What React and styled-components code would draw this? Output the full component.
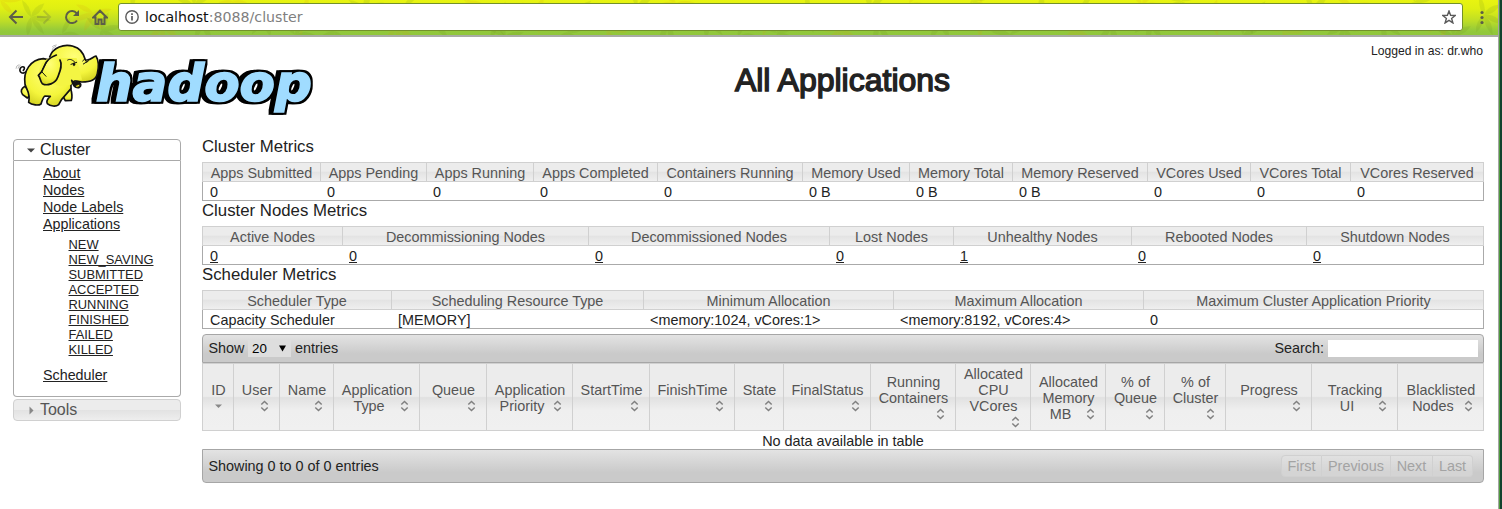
import React from 'react';
import styled, { createGlobalStyle, css } from 'styled-components';

const Global = createGlobalStyle`
  * { box-sizing: border-box; }
  html, body { margin: 0; padding: 0; background: #fff; }
  body { font-family: "Liberation Sans", Arial, sans-serif; font-size: 14.4px; color: #222; overflow: hidden; }
`;

const Window = styled.div`
  width: 1502px;
  height: 509px;
  display: flex;
  background: #fff;
  overflow: hidden;
`;
const View = styled.div`
  flex: 1;
  min-width: 0;
  display: flex;
  flex-direction: column;
`;
const DesktopEdge = styled.div`
  width: 4px;
  border-left: 1px solid #a5a5a5;
  background: linear-gradient(90deg, #4f9a3d 0 1px, #12422e 1px);
`;

const Toolbar = styled.header`
  height: 37px;
  flex: none;
  display: grid;
  border-bottom: 2px solid #a9aca5;
  background: linear-gradient(#e8f410 0, #dfef13 25%, #bddd27 60%, #93c93b 88%, #90c63c 100%);
  & > * { grid-area: 1 / 1; }
`;
const Foliage = styled.svg`
  width: 1498px;
  height: 35px;
`;
const ToolbarItems = styled.div`
  display: flex;
  align-items: flex-start;
  padding: 3px 0 0 8px;
  z-index: 1;
`;
const NavIcon = styled.svg`
  width: 16px;
  height: 16px;
  flex: none;
  margin: 6px 12px 0 0;
  fill: none;
  stroke: #5c5e48;
  stroke-width: 2;
  opacity: ${(p) => (p.$faded ? 0.25 : 1)};
`;
const Address = styled.div`
  width: 1345px;
  flex: none;
  height: 28px;
  margin-left: -2px;
  padding: 0 6px;
  display: flex;
  align-items: center;
  border: 1px solid #73912a;
  border-radius: 3px;
  background: #fff;
  font: 14.2px "DejaVu Sans", sans-serif;
  color: #808080;
`;
const Host = styled.span`color: #111;`;
const Url = styled.span`
  flex: 1;
  margin-left: 6px;
  white-space: nowrap;
`;
const AddressIcon = styled.svg`
  width: 14px;
  height: 14px;
  fill: none;
  stroke: #5a5a5a;
  stroke-width: 1.4;
`;
const Dots = styled.svg`
  width: 4px;
  height: 14px;
  margin: 7px 0 0 17px;
  fill: #5c5e48;
`;

const PageHead = styled.div`
  height: 102px;
  flex: none;
  display: grid;
  grid-template-columns: 202px 1281px;
`;
const Logo = styled.svg`
  width: 310px;
  height: 80px;
  margin: 1px 0 0 10px;
  overflow: visible;
`;
const LogoWord = styled.text`
  font: italic bold 156px "DejaVu Sans", sans-serif;
  fill: #a0dcff;
  stroke: #a0dcff;
  stroke-width: 5px;
  stroke-linejoin: miter;
`;
const HeadRight = styled.div`
  display: flex;
  flex-direction: column;
`;
const User = styled.div`
  align-self: flex-end;
  margin-top: 7px;
  font-size: 12.15px;
  line-height: 14px;
  white-space: nowrap;
`;
const Title = styled.h1`
  margin: 4px 0 0;
  text-align: center;
  font-size: 32px;
  line-height: 37px;
  font-weight: normal;
  -webkit-text-stroke: 1.4px #222;
`;

const Body = styled.div`
  display: flex;
  padding-left: 13px;
`;
const Sidebar = styled.nav`
  width: 168px;
  margin-right: 21px;
`;
const Fold = styled.div`
  height: 22px;
  display: flex;
  align-items: center;
  padding-left: 12px;
  font-size: 16px;
  letter-spacing: -0.05px;
  border: 1px solid #aaa;
  border-radius: 4px 4px 0 0;
  color: #222;
  ${(p) => p.$closed && css`
    margin-top: 2px;
    border-color: #d0d0d0;
    border-radius: 4px;
    color: #555;
    background: linear-gradient(#ececec 0 48%, #e2e2e2 50%, #eee 100%);
  `}
`;
const FoldArrow = styled.svg`
  width: 10px;
  height: 10px;
  margin-right: 4px;
  fill: ${(p) => p.$color};
`;
const MenuBody = styled.div`
  height: 236px;
  padding: 4px 0 0 29px;
  border: 1px solid #aaa;
  border-top: 0;
  border-radius: 0 0 4px 4px;
  display: flex;
  flex-direction: column;
  align-items: flex-start;
`;
const MenuLink = styled.a`
  font-size: 14.3px;
  line-height: 17px;
  text-decoration: underline;
`;
const StateList = styled.div`
  display: flex;
  flex-direction: column;
  align-items: flex-start;
  margin: 4px 0 10px 25.5px;
`;
const StateLink = styled(MenuLink)`
  font-size: 12.9px;
  line-height: 15px;
`;

const Main = styled.main`width: 1282px;`;
const SectionTitle = styled.div`
  height: ${(p) => (p.$first ? 23 : 25)}px;
  padding-top: ${(p) => (p.$first ? 0 : 2)}px;
  font-size: 16.8px;
  line-height: 15px;
`;
const gridCols = css`
  display: grid;
  grid-template-columns: ${(p) => p.$cols};
`;
const Metrics = styled.div`height: 39px;`;
const MetricsHead = styled.div`
  ${gridCols}
  height: 20px;
  border: solid #d0d0d0;
  border-width: 1px 1px 1px 0;
  background: linear-gradient(#ececec 0 46%, #e3e3e3 50%, #efefef 100%);
  color: #555;
`;
const MetricsTh = styled.div`
  height: 18px;
  border-left: 1px solid #d0d0d0;
  text-align: center;
  line-height: 20px;
  white-space: nowrap;
`;
const MetricsRow = styled.div`
  ${gridCols}
  height: 19px;
  border: 1px solid #aaa;
  border-top: 0;
`;
const MetricsTd = styled.div`
  padding-left: 6px;
  &:first-child { padding-left: 7px; }
  line-height: 21px;
  white-space: nowrap;
  text-decoration: ${(p) => (p.$link ? 'underline' : 'none')};
`;

const Bar = styled.div`
  height: ${(p) => (p.$foot ? 34 : 29)}px;
  margin-top: ${(p) => (p.$foot ? 0 : 5)}px;
  padding: 0 5px 0 5.4px;
  display: flex;
  align-items: center;
  line-height: ${(p) => (p.$foot ? 16 : 17)}px;
  border: 1px solid #a6a6a6;
  border-radius: ${(p) => (p.$foot ? '0 0 4px 4px' : '4px 4px 0 0')};
  background: linear-gradient(#e3e3e3, #cacaca 70%, #cacaca);
`;
const BarText = styled.span`padding-bottom: 1px;`;
const Select = styled.div`
  width: 43px;
  height: 17px;
  margin: 0 4px 0 3.600px;
  padding: 0 5px 0 4px;
  display: flex;
  align-items: center;
  justify-content: space-between;
  background: #dedede;
  font-size: 13.33px;
  color: #000;
`;
const Spacer = styled.div`flex: 1;`;
const SearchBox = styled.div`
  width: 150px;
  height: 17px;
  margin-left: 4px;
  background: #fff;
`;
const AppsHead = styled.div`
  ${gridCols}
  height: 68px;
  border: solid #d0d0d0;
  border-width: 1px 1px 1px 0;
  background: linear-gradient(#ececec 0 49%, #e1e1e1 51%, #efefef 70%, #f0f0f0);
  color: #555;
`;
const AppsTh = styled.div`
  border-left: 1px solid #d0d0d0;
  padding: 1px 6px 0 7px;
  display: grid;
  align-content: center;
`;
const AppsLabel = styled.div`
  display: flow-root;
  text-align: center;
  line-height: 16px;
  white-space: pre;
`;
const Sort = styled.svg`
  float: right;
  width: 16px;
  height: 16px;
`;
const Empty = styled.div`
  height: 18px;
  line-height: 20px;
  text-align: center;
`;
const Pager = styled.div`
  display: flex;
  margin-right: 5px;
  color: #a3a3a3;
`;
const PageButton = styled.div`
  width: ${(p) => p.$w}px;
  height: 22px;
  line-height: 21px;
  text-align: center;
  border: 1px solid #d0d0d0;
  border-left-width: ${(p) => (p.$first ? 1 : 0)}px;
  border-radius: ${(p) => (p.$first ? '4px 0 0 4px' : p.$last ? '0 4px 4px 0' : 0)};
  background: rgba(235, 235, 235, 0.3);
`;

const tables = [
  {
    title: 'Cluster Metrics',
    widths: [118, 106, 107, 124, 145, 107, 103, 135, 103, 100],
    cells: [['Apps Submitted', '0'], ['Apps Pending', '0'], ['Apps Running', '0'], ['Apps Completed', '0'], ['Containers Running', '0'], ['Memory Used', '0 B'], ['Memory Total', '0 B'], ['Memory Reserved', '0 B'], ['VCores Used', '0'], ['VCores Total', '0'], ['VCores Reserved', '0']],
  },
  {
    title: 'Cluster Nodes Metrics',
    link: true,
    widths: [140, 246, 241, 124, 178, 175],
    cells: [['Active Nodes', '0'], ['Decommissioning Nodes', '0'], ['Decommissioned Nodes', '0'], ['Lost Nodes', '0'], ['Unhealthy Nodes', '1'], ['Rebooted Nodes', '0'], ['Shutdown Nodes', '0']],
  },
  {
    title: 'Scheduler Metrics',
    widths: [189, 252, 250, 250],
    cells: [['Scheduler Type', 'Capacity Scheduler'], ['Scheduling Resource Type', '[MEMORY]'], ['Minimum Allocation', '<memory:1024, vCores:1>'], ['Maximum Allocation', '<memory:8192, vCores:4>'], ['Maximum Cluster Application Priority', '0']],
  },
];
const toCols = (w) => w.map((n) => `${n}px`).join(' ') + ' 1fr';

const appWidths = [31, 46, 54, 86, 67, 86, 77, 85, 49, 87, 85, 75, 75, 59, 61, 86, 86];
const appCols = ['ID', 'User', 'Name', 'Application\nType', 'Queue', 'Application\nPriority', 'StartTime', 'FinishTime', 'State', 'FinalStatus', 'Running\nContainers', 'Allocated\nCPU\nVCores', 'Allocated\nMemory\nMB', '% of\nQueue', '% of\nCluster', 'Progress', 'Tracking\nUI', 'Blacklisted\nNodes'];
const states = ['NEW', 'NEW_SAVING', 'SUBMITTED', 'ACCEPTED', 'RUNNING', 'FINISHED', 'FAILED', 'KILLED'];

function SortIcon({ down }) {
  return (
    <Sort viewBox="0 0 16 16">
      {down
        ? <path d="M4 6.500h7l-3.500 3.500z" fill="#888" />
        : <path d="M4.300 6.500 7.500 3.500l3.200 3M4.300 9.500 7.500 12.500l3.200-3" fill="none" stroke="#808080" strokeWidth="1.5" />}
    </Sort>
  );
}

function MetricsTable({ title, widths, cells, link, first }) {
  const cols = toCols(widths);
  return (
    <>
      <SectionTitle $first={first}>{title}</SectionTitle>
      <Metrics>
        <MetricsHead $cols={cols}>{cells.map(([h]) => <MetricsTh key={h}>{h}</MetricsTh>)}</MetricsHead>
        <MetricsRow $cols={cols}>{cells.map(([h, v]) => <MetricsTd key={h} $link={link}>{v}</MetricsTd>)}</MetricsRow>
      </Metrics>
    </>
  );
}

function Leaves() {
  const sprigs = Array.from({ length: 62 }, (_, i) => ({ x: i * 25 + ((i * 29) % 23), y: (i * 17) % 38, r: (i * 53) % 180 }));
  return (
    <Foliage viewBox="0 0 1498 35">
      {sprigs.map(({ x, y, r }, i) => (
        <g key={i} transform={`translate(${x} ${y}) rotate(${r})`} fill={i % 3 ? '#6f8d1c' : '#d99d13'} opacity="0.15">
          <path d="M0 0Q9-6 22 0 9 5 0 0" />
          <path d="M0 0Q2-10 15-14 11-3 0 0" />
          <path d="M0 0Q-8-8-3-19 4-9 0 0" />
          <path d="M0 0Q9 3 13 14 2 11 0 0" />
          <path d="M0 0Q-9 3-19-3-9-7 0 0" />
        </g>
      ))}
    </Foliage>
  );
}

function HadoopLogo() {
  return (
    <Logo viewBox="0 0 930 240">
      <defs>
        <radialGradient id="hide" cx="0.5" cy="0.3" r="0.75">
          <stop offset="0" stopColor="#ffff79" />
          <stop offset="0.65" stopColor="#f4f53c" />
          <stop offset="1" stopColor="#d0cf20" />
        </radialGradient>
        <filter id="slab" x="-5%" y="-10%" width="110%" height="120%" colorInterpolationFilters="sRGB">
          <feMorphology in="SourceAlpha" operator="dilate" radius="6 6" result="edge" />
          <feOffset in="edge" dx="-9" result="side" />
          <feMerge>
            <feMergeNode in="side" />
            <feMergeNode in="edge" />
            <feMergeNode in="SourceGraphic" />
          </feMerge>
        </filter>
      </defs>
      <LogoWord x="257" y="189" textLength="649" lengthAdjust="spacingAndGlyphs" filter="url(#slab)">hadoop</LogoWord>
      <g stroke="#111" strokeWidth="5" strokeLinejoin="round" strokeLinecap="round" fill="url(#hide)">
        <path d="M51 98C40 112 25 103 31 91 37 82 49 88 40 97" fill="none" />
        <path d="M160 152C158 170 160 181 166 188L184 187C189 174 185 162 181 149Z" />
        <path d="M45 145C34 151 30 160 38 170L52 180 65 169Z" />
        <path d="M100 62C61 65 39 99 45 139 50 157 62 164 56 193 66 202 86 203 93 198 98 184 100 175 105 174L121 175C114 181 108 190 112 197 121 206 139 206 146 200 151 189 157 180 170 167L183 152 183 80Z" />
        <path d="M119 57C128 28 163 16 190 25 211 30 221 47 226 65 240 71 249 55 258 54 266 67 267 86 262 107 257 127 242 132 216 132 207 131 197 130 192 127" />
        <path d="M119 60C98 66 80 90 90 125L150 145 183 140 193 127 216 125 200 60Z" fill="#f4f543" stroke="none" />
        <path d="M185 127C188 140 194 151 207 149 215 144 213 137 208 133" fill="#151515" />
        <path d="M196 143 207 139 210 145 201 148Z" fill="#eee51f" strokeWidth="2" />
        <path d="M139 51C118 59 108 67 103 84 99 97 94 104 85 112 92 120 90 130 97 137 111 145 137 137 143 118 149 102 159 82 150 66" />
        <path d="M113 68 96 97M97 103 108 115M173 66C181 61 189 67 194 72M183 79 200 73M218 69 224 63 230 73M220 78 236 68" fill="none" strokeWidth="3" />
        <ellipse cx="192" cy="79" rx="3" ry="5" fill="#111" strokeWidth="1" />
        <path d="M18 91Q18 82 27 80M24 91Q24 85 31 82M126 36Q128 27 137 25M127 26Q130 22 139 21" fill="none" stroke="#999" strokeWidth="2" />
      </g>
    </Logo>
  );
}

export default function App() {
  return (
    <Window>
      <Global />
      <View>
        <Toolbar>
          <Leaves />
          <ToolbarItems>
            <NavIcon viewBox="0 0 16 16"><path d="M15 8H2.500M8.500 1.500 2 8l6.500 6.500" /></NavIcon>
            <NavIcon viewBox="0 0 16 16" $faded><path d="M1 8h12.500M7.500 1.500 14 8l-6.500 6.500" /></NavIcon>
            <NavIcon viewBox="0 0 16 16"><path d="M13 11.500A6 6 0 1 1 12.700 4.300" /><path d="M15 1v6H9z" fill="#5c5e48" stroke="none" /></NavIcon>
            <NavIcon viewBox="0 0 16 16"><path d="M3.500 8.500V15h3v-4.500h3V15h3V8.500h2.300L8 1.700 1.200 8.500z" /></NavIcon>
            <Address>
              <AddressIcon viewBox="0 0 14 14"><circle cx="7" cy="7" r="6.200" /><path d="M7 6v4.500M7 3.300v1.600" strokeWidth="1.700" /></AddressIcon>
              <Url><Host>localhost</Host>:8088/cluster</Url>
              <AddressIcon viewBox="0 0 14 14"><path d="M7 1l1.600 4.300 4.600.2-3.600 2.900 1.300 4.500L7 10.300l-3.900 2.600 1.300-4.500L.8 5.500l4.600-.2z" /></AddressIcon>
            </Address>
            <Dots viewBox="0 0 4 14"><circle cx="2" cy="2.500" r="1.600" /><circle cx="2" cy="7.500" r="1.600" /><circle cx="2" cy="12.500" r="1.600" /></Dots>
          </ToolbarItems>
        </Toolbar>
        <PageHead>
          <HadoopLogo />
          <HeadRight>
            <User>Logged in as: dr.who</User>
            <Title>All Applications</Title>
          </HeadRight>
        </PageHead>
        <Body>
          <Sidebar>
            <Fold><FoldArrow viewBox="0 0 10 10" $color="#444"><path d="M1 3.500h8l-4 4z" /></FoldArrow>Cluster</Fold>
            <MenuBody>
              <MenuLink>About</MenuLink>
              <MenuLink>Nodes</MenuLink>
              <MenuLink>Node Labels</MenuLink>
              <MenuLink>Applications</MenuLink>
              <StateList>{states.map((s) => <StateLink key={s}>{s}</StateLink>)}</StateList>
              <MenuLink>Scheduler</MenuLink>
            </MenuBody>
            <Fold $closed><FoldArrow viewBox="0 0 10 10" $color="#888"><path d="M3.500 1.500v8l4-4z" /></FoldArrow>Tools</Fold>
          </Sidebar>
          <Main>
            {tables.map((t, i) => <MetricsTable key={t.title} {...t} first={i === 0} />)}
            <Bar>
              <BarText>Show</BarText>
              <Select><span>20</span><svg width="7" height="7" viewBox="0 0 7 7"><path d="M0 .5h7L3.500 6.500z" /></svg></Select>
              <BarText>entries</BarText>
              <Spacer />
              <BarText>Search:</BarText>
              <SearchBox />
            </Bar>
            <AppsHead $cols={toCols(appWidths)}>
              {appCols.map((c, i) => (
                <AppsTh key={c}><AppsLabel>{c}<SortIcon down={i === 0} /></AppsLabel></AppsTh>
              ))}
            </AppsHead>
            <Empty>No data available in table</Empty>
            <Bar $foot>
              <span>Showing 0 to 0 of 0 entries</span>
              <Spacer />
              <Pager>
                <PageButton $w={41} $first>First</PageButton>
                <PageButton $w={69}>Previous</PageButton>
                <PageButton $w={42}>Next</PageButton>
                <PageButton $w={40} $last>Last</PageButton>
              </Pager>
            </Bar>
          </Main>
        </Body>
      </View>
      <DesktopEdge />
    </Window>
  );
}
